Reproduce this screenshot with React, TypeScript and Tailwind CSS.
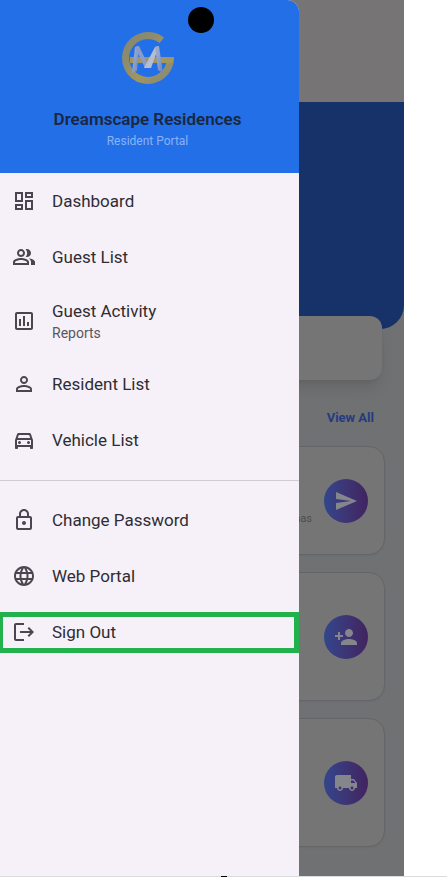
import type { ReactNode } from "react";
import type { IconType } from "react-icons";
import {
  MdLanguage,
  MdLocalShipping,
  MdLogout,
  MdOutlineAssessment,
  MdOutlineDashboard,
  MdOutlineDirectionsCar,
  MdOutlineLock,
  MdOutlinePeopleAlt,
  MdPersonAdd,
  MdPersonOutline,
  MdSend,
} from "react-icons/md";

function Logo() {
  return (
    <svg viewBox="0 0 60 60" className="size-[60px]" role="img" aria-label="GM logo">
      <defs>
        <linearGradient id="gold" x1="0" y1="0" x2="1" y2="1">
          <stop offset="0" stopColor="#83866f" />
          <stop offset="0.35" stopColor="#8f8c6c" />
          <stop offset="0.6" stopColor="#a3965c" />
          <stop offset="1" stopColor="#7d8482" />
        </linearGradient>
        <linearGradient id="silver" x1="0" y1="0" x2="1" y2="1">
          <stop offset="0" stopColor="#a3b0cf" />
          <stop offset="0.5" stopColor="#8f9fc4" />
          <stop offset="1" stopColor="#6a84b8" />
        </linearGradient>
      </defs>
      <path
        d="M46 9.5 A26 26 0 1 0 56 30 L49 30 A19 19 0 1 1 41.7 15 Z"
        fill="url(#gold)"
      />
      <path d="M12 29 H56 L55 35 H12 Z" fill="#a2965f" />
      <path d="M17 19 L21 18 L19 43 L14 45 Z" fill="url(#silver)" />
      <path d="M17 19 L21 18 L31 39 L27 40 Z" fill="#8b9dc6" />
      <path d="M37 19 L41 18 L33 40 L26 40 Z" fill="#b4bdd1" />
      <path d="M37 19 L41 18 L45 45 L40 42 Z" fill="url(#silver)" />
    </svg>
  );
}

type ItemProps = {
  icon: IconType;
  label: string;
  note?: string;
  marked?: boolean;
};

function MenuItem({ icon: Icon, label, note, marked }: ItemProps) {
  return (
    <li>
      <button
        type="button"
        className={
          note
            ? "flex h-[71px] w-full items-center gap-4 px-3 text-left"
            : "relative flex h-14 w-full items-center gap-4 px-3 text-left"
        }
      >
        <Icon className="size-6 shrink-0 text-[#4a464f]" />
        <span className="flex flex-col">
          <span className="text-[17px] leading-6 text-[#2f2c33]">{label}</span>
          {note && <span className="text-sm leading-5 text-[#5a5660]">{note}</span>}
        </span>
        {marked && (
          <span className="absolute inset-x-0 top-2 bottom-[7px] border-[5px] border-l-[3px] border-[#22b14c]" />
        )}
      </button>
    </li>
  );
}

function Drawer() {
  return (
    <aside className="absolute inset-y-0 left-0 w-[299px] overflow-hidden rounded-tr-xl bg-[#f6f1f9]">
      <header className="flex h-[173px] flex-col items-center bg-[#226fe8] pt-7 pr-1">
        <Logo />
        <h1 className="mt-[19px] text-[17px] leading-6 font-semibold text-[#1b2740]">
          Dreamscape Residences
        </h1>
        <p className="text-xs leading-5 text-[#8ab3f5]">Resident Portal</p>
      </header>
      <nav>
        <ul>
          <MenuItem icon={MdOutlineDashboard} label="Dashboard" />
          <MenuItem icon={MdOutlinePeopleAlt} label="Guest List" />
          <MenuItem icon={MdOutlineAssessment} label="Guest Activity" note="Reports" />
          <MenuItem icon={MdPersonOutline} label="Resident List" />
          <MenuItem icon={MdOutlineDirectionsCar} label="Vehicle List" />
        </ul>
        <hr className="mt-3 mb-[11px] border-[#d0ccd5]" />
        <ul>
          <MenuItem icon={MdOutlineLock} label="Change Password" />
          <MenuItem icon={MdLanguage} label="Web Portal" />
          <MenuItem icon={MdLogout} label="Sign Out" marked />
        </ul>
      </nav>
    </aside>
  );
}

function ActionCard({
  icon: Icon,
  label,
  height,
  children,
}: {
  icon: IconType;
  label: string;
  height: string;
  children?: ReactNode;
}) {
  return (
    <section
      className={`${height} flex items-center justify-end gap-3 rounded-2xl border border-[#636568] bg-[#757575] pr-4 shadow-xs`}
    >
      {children}
      <button
        type="button"
        aria-label={label}
        className="flex size-11 items-center justify-center rounded-full bg-linear-to-r from-[#32468c] to-[#41235f]"
      >
        <Icon className="size-6 text-[#85858c]" />
      </button>
    </section>
  );
}

export default function App() {
  return (
    <div className="flex min-h-screen flex-col bg-white font-[Roboto,sans-serif]">
      <div className="relative mr-[43px] flex-1 bg-[#6f7173]">
        <div className="h-[102px] bg-[#767474]" />
        <div className="h-[227px] rounded-br-3xl bg-[#163269]" />
        <div className="mr-[22px] -mt-[13px] h-16 rounded-xl bg-[#757575] shadow-lg" />
        <div className="mt-7 mr-[30px] flex justify-end">
          <a href="#all" className="text-[13px] leading-5 font-bold text-[#263a80]">
            View All
          </a>
        </div>
        <div className="mt-[18px] mr-[19px] flex flex-col gap-[17px]">
          <ActionCard icon={MdSend} label="Send" height="h-[109px]">
            <span className="mt-9 text-[11px] leading-4 text-[#4d4d4f]">nas</span>
          </ActionCard>
          <ActionCard icon={MdPersonAdd} label="Add guest" height="h-[129px]" />
          <ActionCard icon={MdLocalShipping} label="Delivery" height="h-[129px]" />
        </div>
        <Drawer />
        <div className="absolute top-[7px] left-[188px] size-[26px] rounded-full bg-black" />
      </div>
      <div className="flex h-px justify-center bg-[#dcdcdc]">
        <div className="w-[6px] bg-black" />
      </div>
    </div>
  );
}
